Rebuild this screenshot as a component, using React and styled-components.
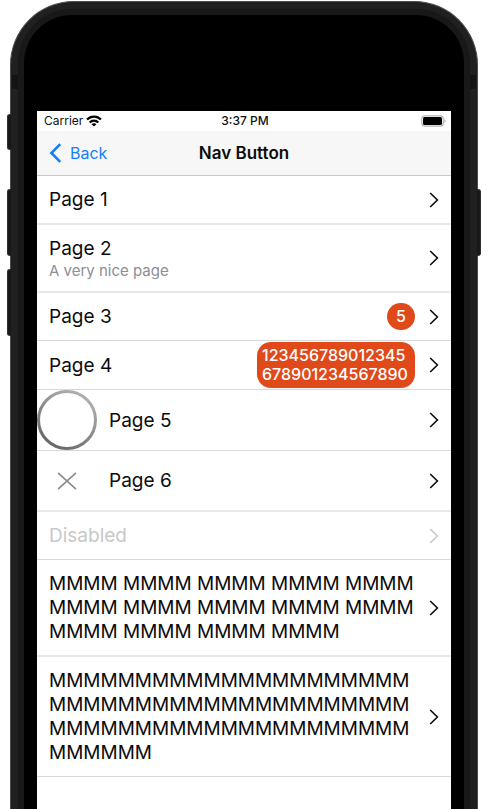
import styled, { createGlobalStyle } from 'styled-components';

const GlobalStyle = createGlobalStyle`
    * {
        box-sizing: border-box;
    }

    body {
        margin: 0;
        background: white;
        font-family: Inter, "Liberation Sans", sans-serif;
    }
`

const Page = styled.div`
    height: 100vh;
    padding: 1px 10px 0;
    overflow: hidden;
`

const Phone = styled.div`
    position: relative;
    min-height: 100%;
    display: flex;
    flex-direction: column;
    background-color: #202020;
    border: 1px solid #4c4e4d;
    border-bottom: 0;
    border-radius: 64px 64px 0 0;
    padding: 7px 7px 0;
`

const Bezel = styled.div`
    flex: 1;
    display: flex;
    flex-direction: column;
    background-color: black;
    border: 6px solid #181818;
    border-bottom: 0;
    border-radius: 54px 54px 0 0;
    padding: 96px 13px 0;
`

const SideButton = styled.span`
    position: absolute;
    top: ${props => props.$top}px;
    ${props => props.$side}: -4px;
    width: 4px;
    height: ${props => props.$height}px;
    background-color: #181818;
    border: 1px solid #303030;
    border-${props => props.$side === 'left' ? 'right' : 'left'}: 0;
    border-radius: ${props => props.$side === 'left' ? '3px 0 0 3px' : '0 3px 3px 0'};
`

const Antenna = styled.span`
    position: absolute;
    top: 73px;
    ${props => props.$side}: 1px;
    width: 6px;
    height: 14px;
    background-color: #141414;
`

const Screen = styled.div`
    flex: 1;
    background-color: white;
`

const StatusBar = styled.div`
    height: 20px;
    padding: 0 5px 0 7px;
    display: grid;
    grid-template-columns: 1fr auto 1fr;
    align-items: center;
    font-size: 12px;
    line-height: 20px;
    color: #111;
`

const Carrier = styled.span`
    display: flex;
    align-items: center;
    gap: 3px;
`

const Time = styled.span`
    font-weight: 500;
`

const Battery = styled.svg`
    justify-self: end;
`

const NavBar = styled.header`
    height: 45px;
    padding: 0 12px;
    display: grid;
    grid-template-columns: 1fr auto 1fr;
    align-items: center;
    background-color: #f7f7f7;
    border-bottom: 1px solid #c8c8c8;
`

const BackButton = styled.button`
    justify-self: start;
    padding: 0;
    display: flex;
    align-items: center;
    gap: 8px;
    border: 0;
    background: none;
    color: #147efb;
    font-family: inherit;
    font-size: 16px;
    line-height: 24px;
`

const Title = styled.h1`
    margin: 0;
    color: #0c0c0c;
    font-size: 17px;
    font-weight: 600;
    line-height: 24px;
`

const Row = styled.button`
    width: 100%;
    padding: 0 12px 0 ${props => props.$thumb ? 0 : 12}px;
    display: flex;
    align-items: center;
    border: 0;
    border-bottom: ${props => props.$soft ? '2px solid #e8e8e8' : '1px solid #d8d8d8'};
    background: none;
    color: #0c0c0c;
    font-family: inherit;
    text-align: left;

    &:disabled {
        color: #c8c8c8;
    }
`

const Label = styled.span`
    flex: 1;
    min-width: 0;
    padding: 12px 0 11px;
    display: flex;
    flex-direction: column;
    font-size: 19px;
    line-height: 24px;
    overflow-wrap: anywhere;
`

const Description = styled.span`
    color: #8e8e93;
    font-size: 15px;
    line-height: 19px;
`

const Badge = styled.span`
    max-width: 158px;
    margin: 1px 0;
    padding: 4px ${props => props.$single ? 9 : 5}px;
    border-radius: 14px;
    background-color: #e04a1a;
    color: white;
    font-size: 16px;
    font-weight: 500;
    line-height: 19px;
    overflow-wrap: anywhere;
`

const Thumb = styled.span`
    width: 60px;
    min-height: 59px;
    margin-right: 12px;
    display: flex;
    align-items: center;
    justify-content: center;
`

const Chevron = styled.svg`
    flex: none;
    margin-left: 14px;
`

const Ring = () => (
    <svg width="60" height="60" viewBox="0 0 60 60" fill="none">
        <defs>
            <linearGradient id="ring" x1="0.2" y1="1" x2="0.8" y2="0">
                <stop offset="0" stopColor="#646464" />
                <stop offset="1" stopColor="#b4b4b4" />
            </linearGradient>
        </defs>
        <circle cx="30" cy="30" r="28.5" stroke="url(#ring)" strokeWidth="3" />
    </svg>
)

const Cross = () => (
    <svg width="20" height="20" viewBox="0 0 20 20" fill="none" stroke="#8e8e8e" strokeWidth="1.8" strokeLinecap="round">
        <path d="M1.6 2.4 18.4 17.6M18.4 2.4 1.6 17.6" />
    </svg>
)

const WifiIcon = () => (
    <svg width="16" height="12" viewBox="0 0 16 12" fill="none" stroke="#000" strokeWidth="2.2">
        <path d="M1 4.6C4.8 0.6 11.2 0.6 15 4.6" />
        <path d="M3.7 7.4C6.1 4.9 9.9 4.9 12.3 7.4" />
        <path d="M8 11.6 5.6 9.2C6.9 8 9.1 8 10.4 9.2Z" fill="#000" stroke="none" />
    </svg>
)

const rows = [
    { label: 'Page 1', soft: true },
    { label: 'Page 2', description: 'A very nice page', soft: true },
    { label: 'Page 3', badge: '5' },
    { label: 'Page 4', badge: '123456789012345678901234567890' },
    { label: 'Page 5', thumb: <Ring /> },
    { label: 'Page 6', thumb: <Cross />, soft: true },
    { label: 'Disabled', disabled: true },
    { label: Array(14).fill('MMMM').join(' '), soft: true },
    { label: 'M'.repeat(69) },
]

function NavButton({ label, description, badge, thumb, soft, disabled }) {
    return (
        <Row type="button" disabled={disabled} $soft={soft} $thumb={!!thumb}>
            {thumb && <Thumb>{thumb}</Thumb>}
            <Label>
                {label}
                {description && <Description>{description}</Description>}
            </Label>
            {badge && <Badge $single={badge.length === 1}>{badge}</Badge>}
            <Chevron width="10" height="16" viewBox="0 0 10 16" fill="none" stroke="currentColor" strokeWidth="1.6">
                <path d="M1.2 1 8.4 8 1.2 15" />
            </Chevron>
        </Row>
    )
}

function App() {
    return (
        <>
            <GlobalStyle />
            <Page>
                <Phone>
                    <SideButton $side="left" $top={112} $height={36} />
                    <SideButton $side="left" $top={187} $height={67} />
                    <SideButton $side="left" $top={267} $height={67} />
                    <SideButton $side="right" $top={187} $height={67} />
                    <Antenna $side="left" />
                    <Antenna $side="right" />
                    <Bezel>
                        <Screen>
                            <StatusBar>
                                <Carrier>Carrier <WifiIcon /></Carrier>
                                <Time>3:37 PM</Time>
                                <Battery width="25" height="12" viewBox="0 0 25 12">
                                    <rect x="0.8" y="0.8" width="21.4" height="10.4" rx="3" fill="none" stroke="#b4b4b4" strokeWidth="1.2" />
                                    <rect x="2" y="2" width="19" height="8" rx="1.6" />
                                    <path d="M23.4 4v4c1.6-.7 1.6-3.3 0-4Z" fill="#b4b4b4" />
                                </Battery>
                            </StatusBar>
                            <NavBar>
                                <BackButton type="button">
                                    <svg width="13" height="20" viewBox="0 0 13 20" fill="none" stroke="currentColor" strokeWidth="2.6">
                                        <path d="M11.2 1.2 2.4 10l8.8 8.8" />
                                    </svg>
                                    Back
                                </BackButton>
                                <Title>Nav Button</Title>
                            </NavBar>
                            <main>
                                {rows.map(row => <NavButton key={row.label} {...row} />)}
                            </main>
                        </Screen>
                    </Bezel>
                </Phone>
            </Page>
        </>
    )
}

export default App;
